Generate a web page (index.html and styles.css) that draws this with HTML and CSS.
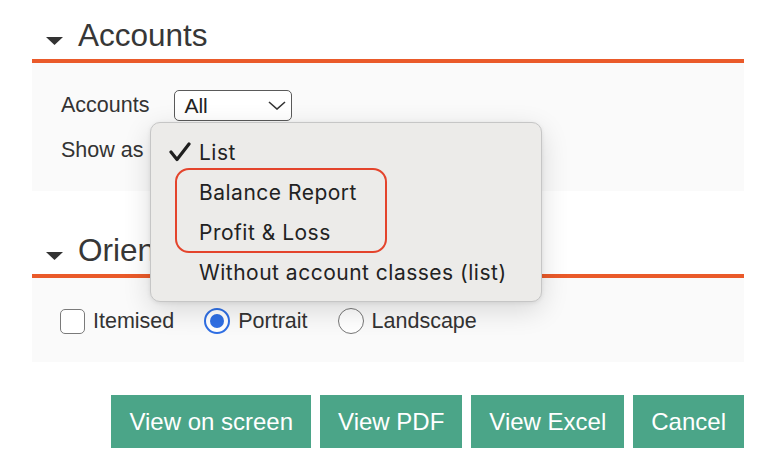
FILE: index.html
```html
<!DOCTYPE html>
<html lang="en">
<head>
<meta charset="utf-8">
<title>Report options</title>
<link rel="stylesheet" href="styles.css">
</head>
<body>
<div class="page">
  <section class="sec">
    <h2 class="sec-head"><svg class="caret" width="17" height="8" viewBox="0 0 17 8"><polygon points="0,0 17,0 8.5,8" fill="#333"/></svg><span>Accounts</span></h2>
    <div class="panel panel-form">
      <div class="form-grid">
        <span class="lbl">Accounts</span>
        <div class="sel sel-all"><span>All</span><svg class="chev" width="18" height="9" viewBox="0 0 18 9"><polyline points="1,1 9,8 17,1" fill="none" stroke="#333" stroke-width="1.6"/></svg></div>
        <span class="lbl">Show as</span>
        <div class="sel sel-list"><span>List</span><svg class="chev" width="18" height="9" viewBox="0 0 18 9"><polyline points="1,1 9,8 17,1" fill="none" stroke="#333" stroke-width="1.6"/></svg></div>
      </div>
    </div>
  </section>

  <section class="sec sec-2">
    <h2 class="sec-head"><svg class="caret" width="17" height="8" viewBox="0 0 17 8"><polygon points="0,0 17,0 8.5,8" fill="#333"/></svg><span>Orientation</span></h2>
    <div class="panel panel-opts">
      <label class="opt"><span class="box"></span><span>Itemised</span></label>
      <label class="opt"><span class="radio radio-on"><span class="dot"></span></span><span>Portrait</span></label>
      <label class="opt"><span class="radio"></span><span>Landscape</span></label>
    </div>
  </section>

  <div class="actions">
    <button class="btn">View on screen</button>
    <button class="btn">View PDF</button>
    <button class="btn">View Excel</button>
    <button class="btn">Cancel</button>
  </div>

  <div class="menu">
    <div class="item"><span class="slot"><svg width="22" height="20" viewBox="0 0 22 20"><polyline points="2,10 8,17.5 20,2" fill="none" stroke="#1f1f1f" stroke-width="3.2" stroke-linecap="round" stroke-linejoin="round"/></svg></span><span>List</span></div>
    <div class="item"><span class="slot"></span><span>Balance Report</span></div>
    <div class="item"><span class="slot"></span><span>Profit &amp; Loss</span></div>
    <div class="item"><span class="slot"></span><span>Without account classes (list)</span></div>
    <div class="mark"></div>
  </div>
</div>
</body>
</html>
```

FILE: styles.css
```css
html, body {
  margin: 0;
  padding: 0;
  background: #ffffff;
}

.page {
  position: relative;
  width: 712px;
  padding: 16px 30px 0 32px;
  font-family: "Liberation Sans", Arial, sans-serif;
  color: #333333;
}

.sec-head {
  display: flex;
  align-items: flex-start;
  margin: 0;
  padding: 0 0 7px 14px;
  height: 36px;
  font-size: 31.5px;
  line-height: 38px;
  font-weight: normal;
  color: #373737;
  border-bottom: 4px solid #ea5a2a;
}

.sec-2 .sec-head {
  margin-top: 40px;
}

.caret {
  margin: 21px 15px 0 0;
  flex: none;
}

.panel {
  background: #fafafa;
}

.panel-form {
  padding: 27px 29px 25px;
}

.form-grid {
  display: grid;
  grid-template-columns: auto auto;
  justify-content: start;
  align-items: center;
  column-gap: 25px;
  row-gap: 14px;
}

.lbl {
  font-size: 21.5px;
}

.sel {
  box-sizing: border-box;
  display: flex;
  align-items: center;
  justify-content: space-between;
  height: 31px;
  width: 118px;
  padding: 0 5px 0 9px;
  border: 1.5px solid #5a5a5a;
  border-radius: 5px;
  background: #ffffff;
  font-size: 21px;
  color: #222222;
}

.sel-list {
  width: 150px;
}

.panel-opts {
  display: flex;
  align-items: center;
  gap: 30px;
  height: 26px;
  padding: 30px 28px 28px;
}

.opt {
  display: flex;
  align-items: center;
  gap: 8px;
  font-size: 21.5px;
  color: #333333;
}

.box {
  box-sizing: border-box;
  width: 25px;
  height: 25px;
  border: 1.5px solid #7a7a7a;
  border-radius: 5px;
  background: #ffffff;
}

.radio {
  box-sizing: border-box;
  display: flex;
  align-items: center;
  justify-content: center;
  width: 26px;
  height: 26px;
  border: 1.5px solid #777777;
  border-radius: 50%;
  background: #ffffff;
}

.radio-on {
  border: 2.5px solid #2f6fe4;
}

.dot {
  width: 14px;
  height: 14px;
  border-radius: 50%;
  background: #2f6fe4;
}

.actions {
  display: flex;
  justify-content: flex-end;
  gap: 9px;
  margin-top: 33px;
}

.btn {
  height: 53px;
  padding: 0 18px;
  border: none;
  border-radius: 0;
  background: #4ba588;
  color: #ffffff;
  font-family: "Liberation Sans", Arial, sans-serif;
  font-size: 24px;
}

.menu {
  position: absolute;
  left: 150px;
  top: 122px;
  box-sizing: border-box;
  width: 392px;
  height: 180px;
  padding: 9px 0 11px;
  background: #ecebe9;
  border: 1px solid #c6c6c6;
  border-radius: 10px;
  box-shadow: 0 8px 28px rgba(0, 0, 0, 0.14), 0 1px 4px rgba(0, 0, 0, 0.08);
  font-family: Inter, "Noto Sans", sans-serif;
  font-size: 21px;
  letter-spacing: 0.5px;
  color: #222222;
}

.item {
  display: flex;
  align-items: center;
  height: 40px;
}

.slot {
  box-sizing: border-box;
  display: flex;
  align-items: center;
  width: 48px;
  padding-left: 18px;
  flex: none;
}

.mark {
  position: absolute;
  left: 24px;
  top: 45px;
  box-sizing: border-box;
  width: 212px;
  height: 85px;
  border: 2.5px solid #e4442c;
  border-radius: 14px;
}
```
